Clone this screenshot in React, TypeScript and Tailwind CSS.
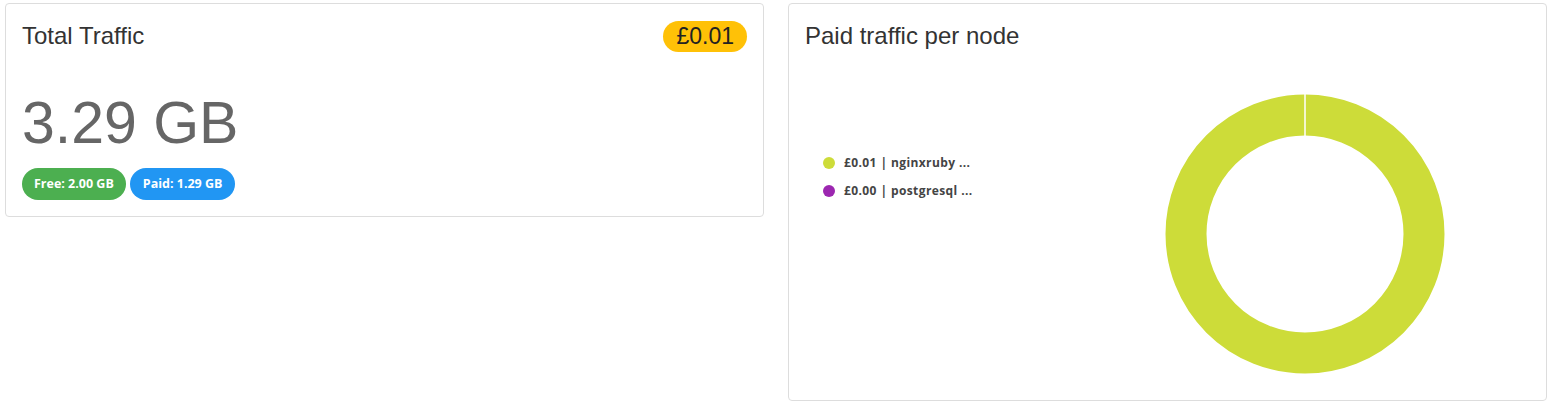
const legend = [
  { color: "bg-[#cddc39]", label: "£0.01 | nginxruby ..." },
  { color: "bg-[#9c27b0]", label: "£0.00 | postgresql ..." },
];

function Donut() {
  // single slice, the other (0.00) only leaves its border line at the top
  const size = 280;
  const c = size / 2;
  return (
    <svg width={size} height={size} viewBox={`0 0 ${size} ${size}`}>
      <circle cx={c} cy={c} r={119} fill="none" stroke="#cddc39" strokeWidth={41} />
      <line x1={c} y1={0} x2={c} y2={42} stroke="#ffffff" strokeWidth={1.5} />
    </svg>
  );
}

export default function App() {
  return (
    <div className="flex items-start gap-6 pl-[5px] pt-[3px] bg-white font-['Liberation_Sans',Arial,sans-serif] text-[#333]">
      <div className="w-[759px] rounded border border-[#dddddd] p-4">
        <div className="flex items-center justify-between h-8">
          <h2 className="text-[24px] leading-none">Total Traffic</h2>
          <span className="rounded-full bg-[#ffc107] px-[13px] h-[31px] flex items-center text-[23px] leading-none text-[#222]">
            £0.01
          </span>
        </div>
        <div className="mt-[42px] text-[59px] leading-none text-[#666]">3.29 GB</div>
        <div className="mt-[15px] flex gap-1 font-['Open_Sans',sans-serif] text-[12.5px] font-bold text-white">
          <span className="rounded-full bg-[#4caf50] h-8 px-3 flex items-center">Free: 2.00 GB</span>
          <span className="rounded-full bg-[#2196f3] h-8 px-[13px] flex items-center">Paid: 1.29 GB</span>
        </div>
      </div>

      <div className="w-[759px] h-[398px] rounded border border-[#dddddd] p-4 flex flex-col">
        <div className="flex items-center h-8">
          <h2 className="text-[24px] leading-none">Paid traffic per node</h2>
        </div>
        <div className="flex flex-1 items-start">
          <ul className="ml-[18px] mt-[104px] flex flex-col gap-[14px] font-['Open_Sans',sans-serif] text-[12px] tracking-[0.4px] font-bold text-[#444]">
            {legend.map((item) => (
              <li key={item.label} className="flex items-center gap-[9px] h-[14px]">
                <span className={`w-3 h-3 rounded-full ${item.color}`}></span>
                {item.label}
              </li>
            ))}
          </ul>
          <div className="ml-auto mr-[85px] mt-[42px]">
            <Donut />
          </div>
        </div>
      </div>
    </div>
  );
}
